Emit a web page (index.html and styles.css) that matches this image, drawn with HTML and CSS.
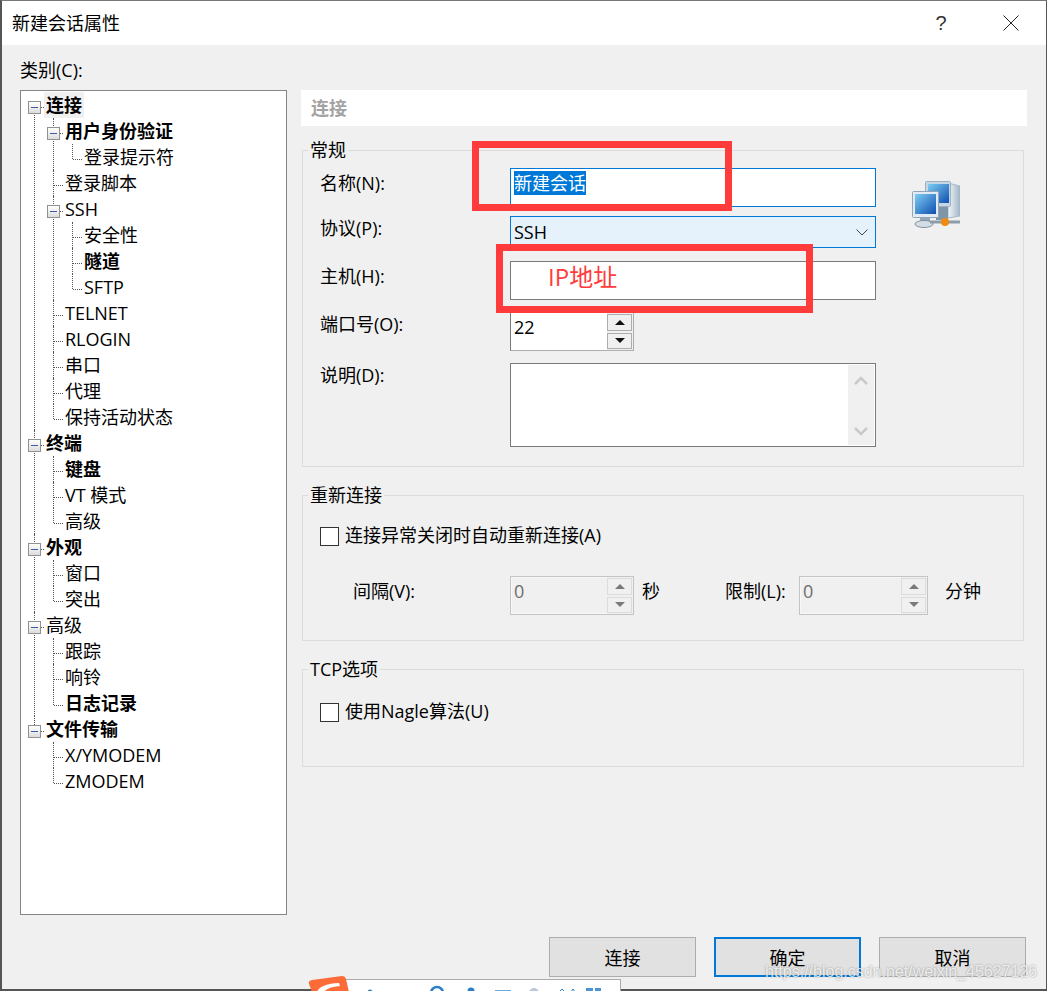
FILE: index.html
```html
<!DOCTYPE html>
<html lang="zh-CN">

<head>
  <meta charset="UTF-8">
  <title>新建会话属性</title>
  <link rel="stylesheet" href="styles.css">
</head>

<body>
  <div class="dialog">
    <div class="titlebar">
      <div class="title">新建会话属性</div>
      <div class="title-btn help">?</div>
      <div class="title-btn">
        <svg width="16" height="16" viewBox="0 0 16 16"><path d="M.5.5l15 15M15.500.5l-15 15" stroke="#222" fill="none"/></svg>
      </div>
    </div>

    <div class="category-label">类别(C):</div>

    <div class="content">
      <div class="tree">
        <ul class="tree-root">
          <li>
            <span class="toggle"></span>
            <div class="node bold"><span class="selected">连接</span></div>
            <ul>
              <li>
                <span class="toggle"></span>
                <div class="node bold">用户身份验证</div>
                <ul>
                  <li><div class="node">登录提示符</div></li>
                </ul>
              </li>
              <li><div class="node">登录脚本</div></li>
              <li>
                <span class="toggle"></span>
                <div class="node">SSH</div>
                <ul>
                  <li><div class="node">安全性</div></li>
                  <li><div class="node bold">隧道</div></li>
                  <li><div class="node">SFTP</div></li>
                </ul>
              </li>
              <li><div class="node">TELNET</div></li>
              <li><div class="node">RLOGIN</div></li>
              <li><div class="node">串口</div></li>
              <li><div class="node">代理</div></li>
              <li><div class="node">保持活动状态</div></li>
            </ul>
          </li>
          <li>
            <span class="toggle"></span>
            <div class="node bold">终端</div>
            <ul>
              <li><div class="node bold">键盘</div></li>
              <li><div class="node">VT 模式</div></li>
              <li><div class="node">高级</div></li>
            </ul>
          </li>
          <li>
            <span class="toggle"></span>
            <div class="node bold">外观</div>
            <ul>
              <li><div class="node">窗口</div></li>
              <li><div class="node">突出</div></li>
            </ul>
          </li>
          <li>
            <span class="toggle"></span>
            <div class="node">高级</div>
            <ul>
              <li><div class="node">跟踪</div></li>
              <li><div class="node">响铃</div></li>
              <li><div class="node bold">日志记录</div></li>
            </ul>
          </li>
          <li>
            <span class="toggle"></span>
            <div class="node bold">文件传输</div>
            <ul>
              <li><div class="node">X/YMODEM</div></li>
              <li><div class="node">ZMODEM</div></li>
            </ul>
          </li>
        </ul>
      </div>

      <div class="panel">
        <div class="panel-header">连接</div>

        <fieldset class="group">
          <legend>常规</legend>
          <div class="form-grid">
            <div class="label low">名称(N):</div>
            <div class="field focused name-field"><span class="selection">新建会话</span></div>
            <svg class="net-icon" width="48" height="48" viewBox="0 0 48 48">
              <defs>
                <linearGradient id="screen" x1="0" y1="0" x2="1" y2="1">
                  <stop offset="0" stop-color="#7ccdf2"/>
                  <stop offset="1" stop-color="#0f4fb0"/>
                </linearGradient>
                <linearGradient id="case" x1="0" y1="0" x2="1" y2="0">
                  <stop offset="0" stop-color="#f4f7fa"/>
                  <stop offset="1" stop-color="#9fb4c6"/>
                </linearGradient>
                <filter id="soft"><feGaussianBlur stdDeviation="0.4"/></filter>
              </defs>
              <g filter="url(#soft)">
                <path d="M36 3l12 3v30l-12 2z" fill="url(#case)" stroke="#a9b9c6"/>
                <rect x="13.500" y="1.500" width="25" height="25" rx="1" fill="#c6d6e4" stroke="#9db0c0"/>
                <rect x="16" y="4" width="21" height="19" fill="url(#screen)"/>
                <path d="M24 27h12v13H24z" fill="#7f95a8"/>
                <rect x="0.500" y="11.500" width="26" height="26" rx="1" fill="#e2ebf3" stroke="#93a6b7"/>
                <rect x="3" y="14" width="21" height="20" fill="url(#screen)"/>
                <path d="M8 38h10v3H8z" fill="#92a6b7"/>
                <ellipse cx="12" cy="44" rx="9" ry="3.500" fill="#d4dde5" stroke="#7f909f"/>
                <path d="M18 42h30" stroke="#8c9da9" stroke-width="3"/>
                <circle cx="33" cy="42" r="4" fill="#f08a10"/>
              </g>
            </svg>

            <div class="label">协议(P):</div>
            <div class="field focused select-field">
              <span>SSH</span>
              <svg width="12" height="7" viewBox="0 0 12 7"><path d="M.5.500L6 6l5.500-5.500" stroke="#444" fill="none"/></svg>
            </div>

            <div class="label low">主机(H):</div>
            <div class="field host-field"></div>

            <div class="label">端口号(O):</div>
            <div class="spin">
              <div class="spin-value">22</div>
              <div class="spin-btns">
                <div class="spin-btn"><i class="arrow-up"></i></div>
                <div class="spin-btn"><i class="arrow-down"></i></div>
              </div>
            </div>

            <div class="label">说明(D):</div>
            <div class="field memo-field">
              <div class="scrollbar">
                <svg width="14" height="9" viewBox="0 0 14 9"><path d="M1 8l6-6 6 6" stroke="#c9c9c9" stroke-width="2.500" fill="none"/></svg>
                <svg width="14" height="9" viewBox="0 0 14 9"><path d="M1 1l6 6 6-6" stroke="#c9c9c9" stroke-width="2.500" fill="none"/></svg>
              </div>
            </div>
          </div>
        </fieldset>

        <fieldset class="group">
          <legend>重新连接</legend>
          <div class="check-row"><span class="checkbox"></span>连接异常关闭时自动重新连接(A)</div>
          <div class="interval-row">
            <div class="label interval-label">间隔(V):</div>
            <div class="spin disabled">
              <div class="spin-value">0</div>
              <div class="spin-btns">
                <div class="spin-btn"><i class="arrow-up"></i></div>
                <div class="spin-btn"><i class="arrow-down"></i></div>
              </div>
            </div>
            <div class="label unit">秒</div>
            <div class="label limit-label">限制(L):</div>
            <div class="spin disabled limit-spin">
              <div class="spin-value">0</div>
              <div class="spin-btns">
                <div class="spin-btn"><i class="arrow-up"></i></div>
                <div class="spin-btn"><i class="arrow-down"></i></div>
              </div>
            </div>
            <div class="label unit-wide">分钟</div>
          </div>
        </fieldset>

        <fieldset class="group">
          <legend>TCP选项</legend>
          <div class="check-row tcp-row"><span class="checkbox"></span>使用Nagle算法(U)</div>
        </fieldset>
      </div>
    </div>

    <div class="footer">
      <div class="btn">连接</div>
      <div class="btn primary">确定</div>
      <div class="btn">取消</div>
    </div>
  </div>

  <!-- hand drawn marks on top of the screenshot -->
  <div class="mark mark-name"></div>
  <div class="mark mark-host"></div>
  <div class="mark-text">IP地址</div>

  <!-- csdn toolbar peeking in at the bottom -->
  <div class="toolbar">
    <svg width="274" height="12" viewBox="0 0 274 12">
      <circle cx="24" cy="12" r="2.500" fill="#2a7fc9"/>
      <circle cx="91" cy="13" r="6" fill="none" stroke="#2a7fc9" stroke-width="2.500"/>
      <circle cx="125" cy="11" r="3.500" fill="#2a7fc9"/>
      <rect x="149" y="10" width="16" height="2" fill="#6aa9e0"/>
      <circle cx="188" cy="13" r="5" fill="#b9c7d6"/>
      <path d="M213 12l3-3 3 3M225 12l2-3 2 3" stroke="#2a7fc9" fill="none"/>
      <rect x="240" y="8" width="7" height="4" fill="#4c94d8"/>
      <rect x="249" y="8" width="6" height="4" fill="#4c94d8"/>
    </svg>
  </div>
  <svg class="toolbar-logo" width="42" height="17" viewBox="0 0 42 17">
    <path d="M1 9q-1-3 3-4L34 1q3 0 4 3l3 13H4z" fill="#fc6b38"/>
    <path d="M9 17q3-8 22-9l1 3q-13 1-16 6z" fill="#fff"/>
  </svg>

  <div class="watermark">https://blog.csdn.net/weixin_45627126</div>
</body>

</html>
```

FILE: styles.css
```css
/* General Reset */
body {
  position: relative;
  width: 1047px;
  height: 991px;
  margin: 0;
  overflow: hidden;
  background-color: #f0f0f0;
  color: #000;
  font-family: "Open Sans", "Noto Sans CJK SC", sans-serif;
  font-size: 18px;
}

.dialog {
  box-sizing: border-box;
  height: 991px;
  border-top: 1px solid #777;
  border-left: 2px solid #555;
  border-right: 1px solid #555;
  border-bottom: 2px solid #555;
}

/* Title bar */
.titlebar {
  display: flex;
  align-items: center;
  height: 44px;
  padding-left: 10px;
  background-color: #fff;
}

.title {
  flex: 1;
  line-height: 44px;
}

.title-btn {
  display: flex;
  align-items: center;
  justify-content: center;
  width: 70px;
  height: 44px;
}

.title-btn.help {
  color: #333;
  font-size: 20px;
  font-family: "Liberation Sans", sans-serif;
}

.category-label {
  padding: 13px 0 8px 18px;
  line-height: 24px;
}

/* Two columns */
.content {
  display: flex;
  gap: 14px;
  padding-left: 18px;
}

/* Tree */
.tree {
  box-sizing: border-box;
  width: 267px;
  height: 825px;
  padding-top: 1px;
  border: 1px solid #858585;
  background-color: #fff;
}

.tree ul {
  list-style: none;
  margin: 0 0 0 19px;
  padding: 0;
}

.tree ul.tree-root {
  margin-left: 0;
}

.tree li {
  position: relative;
}

.tree li::before {
  content: '';
  position: absolute;
  top: 0;
  bottom: 0;
  left: 13px;
  border-left: 1px dotted #555;
}

.tree li:last-child::before {
  bottom: auto;
  height: 15px;
}

.tree-root > li:first-child::before {
  top: 15px;
  bottom: 0;
}

.tree li::after {
  content: '';
  position: absolute;
  top: 15px;
  left: 14px;
  width: 9px;
  border-top: 1px dotted #555;
}

.node {
  position: relative;
  padding-left: 25px;
  height: 26px;
  line-height: 26px;
  white-space: nowrap;
}

.node.bold {
  font-weight: 700;
}

.selected {
  display: inline-block;
  margin-left: -2px;
  padding: 0 2px;
  background-color: #f0f0f0;
}

.toggle {
  position: absolute;
  top: 9px;
  left: 7px;
  z-index: 1;
  box-sizing: border-box;
  width: 13px;
  height: 13px;
  border: 1px solid #919191;
  background: linear-gradient(#fff, #dcdcdc);
}

.toggle::after {
  content: '';
  position: absolute;
  top: 5px;
  left: 2px;
  width: 7px;
  height: 1px;
  background-color: #3c5ca8;
}

/* Right panel */
.panel {
  width: 726px;
}

.panel-header {
  height: 36px;
  padding-left: 10px;
  background-color: #fff;
  color: #a3a3a3;
  font-weight: 700;
  line-height: 36px;
}

.group {
  position: relative;
  min-width: 0;
  width: 722px;
  box-sizing: border-box;
  margin: 18px 0 0 1px;
  padding: 0 17px 25px;
  border: 1px solid #dcdcdc;
}

.panel-header + .group {
  margin-top: 14px;
  padding-bottom: 19px;
}

.group legend {
  margin-left: -12px;
  padding: 0 2px;
  line-height: 20px;
}

.form-grid {
  display: grid;
  grid-template-columns: 190px 366px auto;
  grid-template-rows: 48px 45px 51px 51px 84px;
  align-items: start;
  padding-top: 8px;
}

.form-grid .label {
  grid-column: 1;
}

.form-grid .field,
.form-grid .spin {
  grid-column: 2;
}

.label {
  margin-top: -1px;
  line-height: 26px;
  white-space: nowrap;
}

.label.low {
  padding-top: 3px;
}

.net-icon {
  grid-column: 3;
  grid-row: 1 / span 2;
  margin: 12px 0 0 36px;
}

.field {
  box-sizing: border-box;
  border: 1px solid #7a7a7a;
  background-color: #fff;
}

.field.focused {
  border-color: #0078d7;
}

.name-field {
  height: 39px;
  padding: 2px 3px;
}

.selection {
  display: inline-block;
  background-color: #0078d7;
  color: #fff;
  line-height: 24px;
}

.select-field {
  display: flex;
  align-items: center;
  justify-content: space-between;
  height: 32px;
  padding: 0 7px 0 3px;
  background-color: #e5f1fb;
}

.host-field {
  height: 39px;
}

.memo-field {
  display: flex;
  justify-content: flex-end;
  height: 84px;
  padding: 1px;
}

.scrollbar {
  display: flex;
  flex-direction: column;
  align-items: center;
  justify-content: space-between;
  box-sizing: border-box;
  width: 26px;
  padding: 11px 0 9px;
  background-color: #f0f0f0;
}

/* Spin boxes */
.spin {
  display: flex;
  box-sizing: border-box;
  width: 124px;
  height: 39px;
  border: 1px solid #7a7a7a;
  border-right-color: #adadad;
  border-bottom-color: #adadad;
  background-color: #fff;
}

.spin-value {
  flex: 1;
  padding: 1px 0 0 3px;
  line-height: 26px;
}

.spin-btns {
  display: flex;
  flex-direction: column;
  gap: 2px;
  width: 25px;
  padding: 1px 1px 1px 0;
  background-color: #f0f0f0;
}

.spin-btn {
  display: flex;
  flex: 1;
  align-items: center;
  justify-content: center;
  border: 1px solid #adadad;
  background-color: #f0f0f0;
}

.arrow-up {
  border: 5px solid transparent;
  border-top: 0;
  border-bottom: 5px solid #111;
}

.arrow-down {
  border: 5px solid transparent;
  border-bottom: 0;
  border-top: 5px solid #111;
}

.spin.disabled {
  border-color: #c4c4c4;
  background-color: #f0f0f0;
  box-shadow: inset 0 0 0 1px #f7f7f7;
}

.spin.disabled .spin-value {
  color: #6d6d6d;
}

.spin.disabled .spin-btn {
  border-color: #dcdcdc;
}

.spin.disabled .arrow-up {
  border-bottom-color: #7a7a7a;
}

.spin.disabled .arrow-down {
  border-top-color: #7a7a7a;
}

/* Reconnect + TCP rows */
.check-row {
  display: flex;
  align-items: center;
  gap: 6px;
  margin-top: 17px;
  line-height: 26px;
}

.tcp-row {
  margin: 19px 0 17px;
}

.checkbox {
  box-sizing: border-box;
  width: 19px;
  height: 19px;
  margin-top: 2px;
  border: 1px solid #333;
  background-color: #fff;
}

.interval-row {
  display: flex;
  margin-top: 28px;
}

.interval-row .label {
  padding-top: 3px;
}

.interval-label {
  width: 157px;
  margin-left: 33px;
}

.unit {
  margin-left: 8px;
}

.limit-label {
  width: 74px;
  margin-left: 65px;
}

.limit-spin {
  width: 129px;
}

.unit-wide {
  margin-left: 17px;
}

/* Buttons */
.footer {
  display: flex;
  justify-content: flex-end;
  gap: 18px;
  margin-top: 22px;
  padding-right: 20px;
}

.btn {
  box-sizing: border-box;
  width: 147px;
  height: 40px;
  border: 1px solid #adadad;
  background-color: #e1e1e1;
  line-height: 40px;
  text-align: center;
}

.btn.primary {
  border: 2px solid #0078d7;
  line-height: 38px;
}

/* Overlays */
.mark {
  position: absolute;
  box-sizing: border-box;
  border: 7px solid #ff3b3b;
}

.mark-name {
  top: 141px;
  left: 472px;
  width: 260px;
  height: 70px;
}

.mark-host {
  top: 244px;
  left: 496px;
  width: 317px;
  height: 69px;
}

.mark-text {
  position: absolute;
  top: 259px;
  left: 548px;
  color: #ff3b3b;
  font-size: 24px;
  line-height: 36px;
}

.toolbar {
  position: absolute;
  top: 979px;
  left: 346px;
  box-sizing: border-box;
  width: 275px;
  height: 12px;
  border-top: 1px solid #aaa;
  border-right: 1px solid #aaa;
  background-color: #fff;
}

.toolbar svg {
  display: block;
}

.toolbar-logo {
  position: absolute;
  top: 975px;
  left: 308px;
}

.watermark {
  position: absolute;
  top: 962px;
  left: 765px;
  color: rgba(255, 255, 255, 0.8);
  font-family: "Liberation Sans", sans-serif;
  font-size: 16px;
  line-height: 20px;
  text-shadow: 0 0 2px rgba(0, 0, 0, 0.4);
}
```
